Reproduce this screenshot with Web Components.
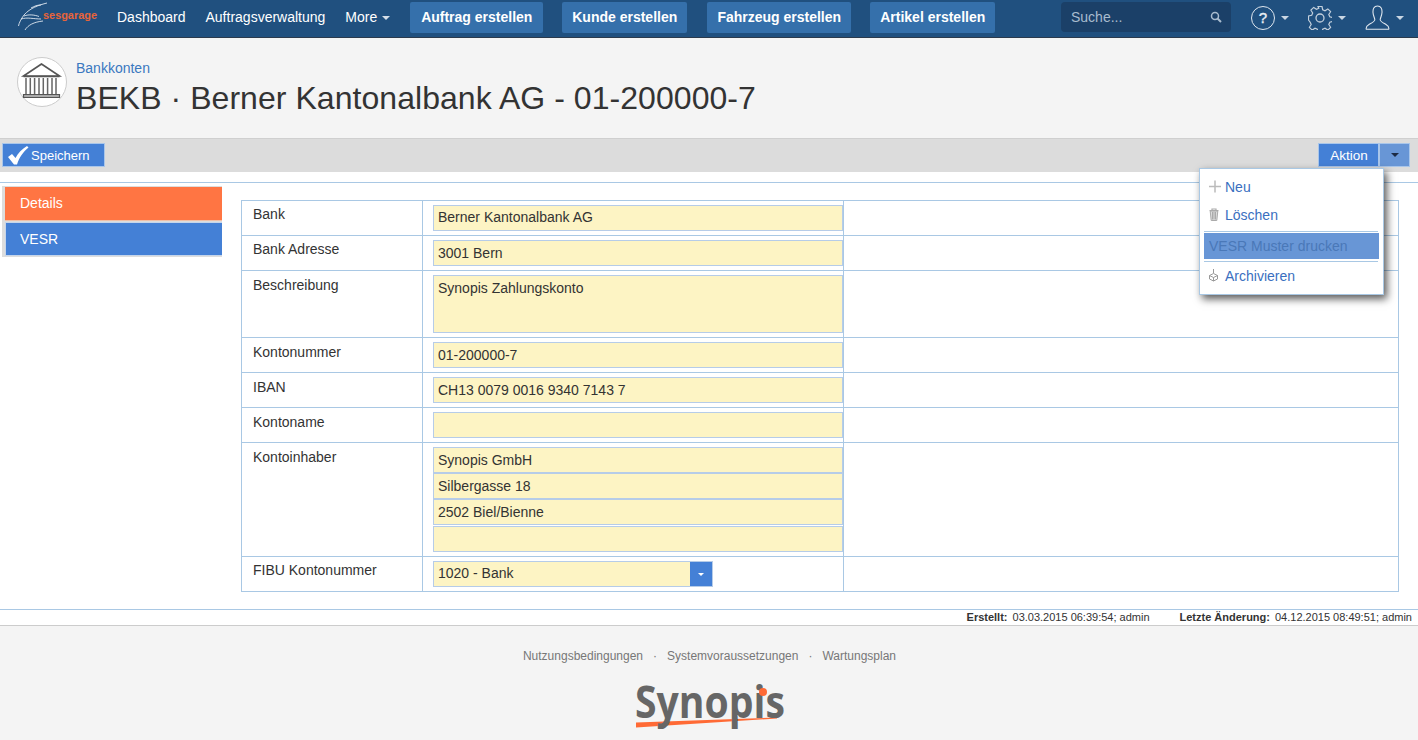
<!DOCTYPE html>
<html lang="de">
<head>
    <meta charset="UTF-8">
    <title>Bankkonten</title>
    <style>
        html, body { margin: 0; height: 100%; overflow: hidden; background: #fff; }
        body { font: 14px "Liberation Sans", Arial, sans-serif; color: #333; }
    </style>
</head>
<body>
    <app-nav>
        <nav-link>Dashboard</nav-link>
        <nav-link>Auftragsverwaltung</nav-link>
        <nav-link caret>More</nav-link>
        <nav-button style="width:133px">Auftrag erstellen</nav-button>
        <nav-button style="width:125px;margin-right:20px">Kunde erstellen</nav-button>
        <nav-button style="width:144px">Fahrzeug erstellen</nav-button>
        <nav-button style="width:125px">Artikel erstellen</nav-button>
    </app-nav>
    <page-header crumb="Bankkonten">BEKB · Berner Kantonalbank AG - 01-200000-7</page-header>
    <tool-bar></tool-bar>
    <main-area>
        <side-tab active>Details</side-tab>
        <side-tab>VESR</side-tab>
        <form-row slot="form" snug label="Bank"><text-field snug>Berner Kantonalbank AG</text-field></form-row>
        <form-row slot="form" snug label="Bank Adresse"><text-field>3001 Bern</text-field></form-row>
        <form-row slot="form" label="Beschreibung"><text-field tall>Synopis Zahlungskonto</text-field></form-row>
        <form-row slot="form" label="Kontonummer"><text-field>01-200000-7</text-field></form-row>
        <form-row slot="form" label="IBAN"><text-field>CH13 0079 0016 9340 7143 7</text-field></form-row>
        <form-row slot="form" label="Kontoname"><text-field></text-field></form-row>
        <form-row slot="form" label="Kontoinhaber">
            <text-field>Synopis GmbH</text-field>
            <text-field>Silbergasse 18</text-field>
            <text-field>2502 Biel/Bienne</text-field>
            <text-field></text-field>
        </form-row>
        <form-row slot="form" snug label="FIBU Kontonummer"><select-field>1020 - Bank</select-field></form-row>
    </main-area>
    <meta-bar></meta-bar>
    <page-footer></page-footer>

    <script>
        const navTemplate = document.createElement('template');
        navTemplate.innerHTML = `
        <style>
            :host { display: flex; align-items: center; height: 35px; background: #20507f; border-bottom: 1px solid #2b3a4c; padding: 0 14px 2px 17px; box-sizing: content-box; }
            .logo { width: 80px; height: 30px; margin-right: 20px; flex: none; overflow: visible; }
            .items { display: flex; align-items: center; }
            .search { margin: -1px 0 0 auto; width: 170px; height: 30px; box-sizing: border-box; padding: 0 9px 0 10px; background: #1b4068; border-radius: 4px; display: flex; align-items: center; justify-content: space-between; color: #a9bccf; font-size: 14px; }
            .tool { display: flex; align-items: center; margin-left: 19px; }
            .tool:first-child { margin-left: 20px; }
            .tool i { margin-left: 6px; border: 4px solid transparent; border-top-color: #c9d6e3; border-bottom: 0; }
            .tools { display: flex; align-items: center; }
        </style>
        <svg class="logo" viewBox="0 0 80 30">
            <g fill="none" stroke="#dfe7ef" stroke-width=".9">
                <path d="M30 0C22 2 13 5 7 12C4 16 2 20 1.500 23"/>
                <path d="M14 5C18 3 20 2 24 2"/>
                <path d="M7 13C12 11 18 12 22 13.500"/>
                <path d="M4 16C10 14 17 16 24 16"/>
                <path d="M8 27C11 22 17 19 26 18"/>
            </g>
            <text x="26" y="16" font-family="'Liberation Sans', sans-serif" font-size="11" font-weight="700" fill="#e8643a" textLength="54" lengthAdjust="spacingAndGlyphs">sesgarage</text>
        </svg>
        <div class="items"><slot></slot></div>
        <div class="search">
            <span>Suche...</span>
            <svg width="12" height="12" viewBox="0 0 12 12" fill="none" stroke="#a9bccf"><circle cx="5" cy="5" r="3.500" stroke-width="1.500"/><path d="M7.500 7.500L11 11" stroke-width="2"/></svg>
        </div>
        <div class="tools">
            <div class="tool">
                <svg width="24" height="24" viewBox="0 0 24 24"><circle cx="12" cy="12" r="11.500" fill="none" stroke="#dfe7ef"/><text x="12" y="17" text-anchor="middle" font-family="'Liberation Sans', sans-serif" font-size="15" fill="#e8eef4" stroke="#e8eef4" stroke-width=".4">?</text></svg>
                <i></i>
            </div>
            <div class="tool">
                <svg width="24" height="24" viewBox="0 0 24 24" fill="none" stroke="#c3d0dd" stroke-width="1.200"><path d="M10 .5h4l.7 3.200 2.300 1 2.800-1.800 2.800 2.800-1.800 2.800 1 2.300 3.200.7v4l-3.200.7-1 2.300 1.800 2.800-2.800 2.800-2.800-1.800-2.300 1-.7 3.200h-4l-.7-3.200-2.300-1-2.800 1.800-2.800-2.800 1.800-2.800-1-2.300L.5 14v-4l3.200-.7 1-2.300-1.800-2.800 2.800-2.800 2.800 1.800 2.300-1z"/><circle cx="12" cy="12" r="4" stroke-width="1.300"/></svg>
                <i></i>
            </div>
            <div class="tool">
                <svg width="25" height="25" viewBox="0 0 25 25" fill="none" stroke="#dfe7ef" stroke-width="1.100"><path d="M12.500 1C8.800 1 7.800 4 8 7.500C8.200 10.500 9.500 12.500 9.800 14.500C10 16.500 7 17.700 4 19.500C1.800 20.800 .8 22.500 1.300 24.300H23.700C24.200 22.500 23.200 20.800 21 19.500C18 17.700 15 16.500 15.200 14.500C15.500 12.500 16.800 10.500 17 7.500C17.200 4 16.200 1 12.500 1Z"/></svg>
                <i></i>
            </div>
        </div>
        `;
        class AppNav extends HTMLElement {
            constructor() {
                super();
                this.attachShadow({mode: 'open'}).appendChild(navTemplate.content.cloneNode(true));
            }
        }

        const navLinkTemplate = document.createElement('template');
        navLinkTemplate.innerHTML = `
        <style>
            :host { display: flex; align-items: center; color: #fff; font-size: 14px; margin-right: 20px; padding-bottom: 2px; }
            i { display: none; margin: 2px 0 0 5px; border: 4px solid transparent; border-top-color: #d5dfe9; border-bottom: 0; }
            :host([caret]) i { display: block; }
        </style>
        <slot></slot><i></i>
        `;
        class NavLink extends HTMLElement {
            constructor() {
                super();
                this.attachShadow({mode: 'open'}).appendChild(navLinkTemplate.content.cloneNode(true));
            }
        }

        const navButtonTemplate = document.createElement('template');
        navButtonTemplate.innerHTML = `
        <style>
            :host { display: block; height: 31px; line-height: 31px; text-align: center; margin-right: 19px; background: #3570ab; color: #fff; font-weight: 700; font-size: 14px; border-radius: 2px; white-space: nowrap; }
        </style>
        <slot></slot>
        `;
        class NavButton extends HTMLElement {
            constructor() {
                super();
                this.attachShadow({mode: 'open'}).appendChild(navButtonTemplate.content.cloneNode(true));
            }
        }

        const headerTemplate = document.createElement('template');
        headerTemplate.innerHTML = `
        <style>
            :host { display: flex; height: 100px; box-sizing: border-box; padding: 19px 0 0 17px; background: #f4f4f4; }
            .badge { width: 50px; height: 50px; box-sizing: border-box; border: 1px solid #ccc; border-radius: 50%; background: #fff; margin-right: 9px; flex: none; }
            .crumb { color: #3a78c0; font-size: 14px; line-height: 16px; margin-top: 3px; }
            .title { color: #333; font-size: 32px; line-height: 40px; margin-top: 2px; white-space: nowrap; letter-spacing: .05px; }
        </style>
        <div class="badge">
            <svg width="48" height="48" viewBox="0 0 48 48" fill="none" stroke="#555">
                <path d="M23.500 6L5.500 18H41.500Z" stroke-width="1.600"/>
                <path d="M5.500 18.500H41.500" stroke-width="1.500"/>
                <path d="M8 20V36M12.300 20V36M16.600 20V36M21 20V36M25.300 20V36M29.600 20V36M34 20V36M38 20V36" stroke="#666" stroke-width="1.500"/>
                <path d="M5.500 36.500H41.500V39.500H5.500Z" fill="#aaa" stroke-width="1.200"/>
            </svg>
        </div>
        <div>
            <div class="crumb"></div>
            <div class="title"><slot></slot></div>
        </div>
        `;
        class PageHeader extends HTMLElement {
            constructor() {
                super();
                const root = this.attachShadow({mode: 'open'});
                root.appendChild(headerTemplate.content.cloneNode(true));
                root.querySelector('.crumb').textContent = this.getAttribute('crumb');
            }
        }

        const toolbarTemplate = document.createElement('template');
        toolbarTemplate.innerHTML = `
        <style>
            :host { display: flex; align-items: center; justify-content: space-between; height: 34px; padding: 0 8px 1px 2px; background: #dcdcdc; border-top: 1px solid #cfcfcf; position: relative; z-index: 2; box-sizing: border-box; }
            .btn { display: flex; align-items: center; box-sizing: border-box; height: 24px; background: #4480d6; border: 1px solid #a9c6ea; color: #fff; font-size: 13px; }
            .save { width: 103px; padding-left: 2px; }
            .save svg { margin-right: 2px; }
            .right { display: flex; gap: 0; position: relative; }
            .act { width: 61px; justify-content: center; font-size: 13.500px; padding-left: 1px; }
            .drop { width: 31px; justify-content: center; background: #6896d6; margin-left: 0; }
            .drop i { border: 4px solid transparent; border-top-color: #1c2b44; border-bottom: 0; }
        </style>
        <div class="btn save">
            <svg width="24" height="22" viewBox="0 0 24 22"><path d="M3 13L7 10L10.500 14C13 9 17 5 22 2L23.500 3.500C18 8 14.500 13 12 20.500H9Z" fill="#fff"/></svg>
            Speichern
        </div>
        <div class="right">
            <div class="btn act">Aktion</div>
            <div class="btn drop"><i></i></div>
            <action-menu></action-menu>
        </div>
        `;
        class ToolBar extends HTMLElement {
            constructor() {
                super();
                this.attachShadow({mode: 'open'}).appendChild(toolbarTemplate.content.cloneNode(true));
            }
        }

        const menuTemplate = document.createElement('template');
        menuTemplate.innerHTML = `
        <style>
            :host { position: absolute; top: 25px; right: 26px; width: 185px; height: 127px; box-sizing: border-box; background: #fff; border: 1px solid #a9c8e4; box-shadow: 3px 4px 8px rgba(0,0,0,.65); padding: 4px 4px 4px; color: #3a6fc0; font-size: 14px; display: block; }
            .item { display: flex; align-items: center; height: 28px; padding-left: 5px; }
            .item svg { width: 13px; margin: -2px 3px 0 0; }
            hr { border: 0; border-top: 1px solid #a9c8e4; margin: 0 1px 0 0; }
            .off { background: #6896d6; color: #4a78b8; height: 26px; padding-left: 5px; display: flex; align-items: center; margin: 1px 0 2px; }
        </style>
        <div class="item"><svg height="13" viewBox="0 0 13 13" stroke="#bbb" fill="none" stroke-width="1.500"><path d="M6 .5V12.500M0 6.500H12"/></svg>Neu</div>
        <div class="item"><svg height="13" viewBox="0 0 13 13" stroke="#aaa" fill="none"><path d="M.5 2.500H9.500M3 2.500V1H7V2.500" stroke-width="1.200"/><path d="M1.200 3L2.200 12.500H7.800L8.800 3Z" fill="#ddd"/><path d="M3.500 4V11.500M5 4V11.500M6.500 4V11.500"/></svg>Löschen</div>
        <hr style="margin-top:2px">
        <div class="off">VESR Muster drucken</div>
        <hr>
        <div class="item"><svg height="13" viewBox="0 0 13 13" stroke="#999" fill="none"><path d="M4.500 0V4M.5 6.500L4.500 4.500L8.500 6.500L4.500 8.500ZM.5 6.500V10L4.500 12L8.500 10V6.500M4.500 8.500V12"/></svg>Archivieren</div>
        `;
        class ActionMenu extends HTMLElement {
            constructor() {
                super();
                this.attachShadow({mode: 'open'}).appendChild(menuTemplate.content.cloneNode(true));
            }
        }

        const mainTemplate = document.createElement('template');
        mainTemplate.innerHTML = `
        <style>
            :host { display: block; height: 437px; box-sizing: border-box; padding-top: 10px; background: #fff; }
            .wrap { display: flex; border-top: 1px solid #a9c8e4; padding-top: 3px; }
            .side { width: 220px; margin-left: 2px; flex: none; background: #ddd; align-self: flex-start; padding: 1px 0 1px 3px; box-sizing: border-box; display: flex; flex-direction: column; gap: 1px; }
            .form { flex: 1; margin: 14px 19px 0 19px; border: 1px solid #a9c8e4; border-bottom: 0; }
        </style>
        <div class="wrap">
            <div class="side"><slot></slot></div>
            <div class="form"><slot name="form"></slot></div>
        </div>
        `;
        class MainArea extends HTMLElement {
            constructor() {
                super();
                this.attachShadow({mode: 'open'}).appendChild(mainTemplate.content.cloneNode(true));
            }
        }

        const tabTemplate = document.createElement('template');
        tabTemplate.innerHTML = `
        <style>
            :host { display: block; height: 34px; line-height: 32px; padding-left: 14px; background: #4480d6; color: #fff; font-size: 14px; box-sizing: border-box; border: 1px solid #c6d5ea; border-right: 0; }
            :host([active]) { background: #ff7543; border: 0; border-bottom: 1px solid #f0c0a8; padding-left: 15px; line-height: 33px; }
        </style>
        <slot></slot>
        `;
        class SideTab extends HTMLElement {
            constructor() {
                super();
                this.attachShadow({mode: 'open'}).appendChild(tabTemplate.content.cloneNode(true));
            }
        }

        const rowTemplate = document.createElement('template');
        rowTemplate.innerHTML = `
        <style>
            :host { display: grid; grid-template-columns: 181px 421px 1fr; border-bottom: 1px solid #a9c8e4; }
            .label { padding: 6px 0 0 11px; color: #333; font-size: 14px; line-height: 16px; border-right: 1px solid #a9c8e4; }
            :host([snug]) .label { padding-top: 5px; }
            .value { padding: 4px 0 4px 10px; border-right: 1px solid #a9c8e4; }
        </style>
        <div class="label"></div>
        <div class="value"><slot></slot></div>
        <div></div>
        `;
        class FormRow extends HTMLElement {
            constructor() {
                super();
                const root = this.attachShadow({mode: 'open'});
                root.appendChild(rowTemplate.content.cloneNode(true));
                root.querySelector('.label').textContent = this.getAttribute('label');
            }
        }

        const fieldTemplate = document.createElement('template');
        fieldTemplate.innerHTML = `
        <style>
            :host { display: block; height: 26px; box-sizing: border-box; border: 1px solid #b6cce8; background: #fdf4c4; color: #333; font-size: 14px; line-height: 24px; padding-left: 4px; }
            :host([snug]) { line-height: 22px; }
            :host([tall]) { height: 58px; line-height: 24px; }
            :host(:last-child:not(:first-child)) { margin-top: 1px; }
        </style>
        <slot></slot>
        `;
        class TextField extends HTMLElement {
            constructor() {
                super();
                this.attachShadow({mode: 'open'}).appendChild(fieldTemplate.content.cloneNode(true));
            }
        }

        const selectTemplate = document.createElement('template');
        selectTemplate.innerHTML = `
        <style>
            :host { display: flex; width: 280px; height: 26px; box-sizing: border-box; border: 1px solid #b6cce8; background: #fdf4c4; color: #333; font-size: 14px; line-height: 22px; }
            .text { flex: 1; padding-left: 4px; }
            .arrow { width: 22px; background: #4480d6; display: flex; align-items: center; justify-content: center; }
            i { border: 3.500px solid transparent; border-top-color: #fff; border-bottom: 0; }
        </style>
        <div class="text"><slot></slot></div>
        <div class="arrow"><i></i></div>
        `;
        class SelectField extends HTMLElement {
            constructor() {
                super();
                this.attachShadow({mode: 'open'}).appendChild(selectTemplate.content.cloneNode(true));
            }
        }

        const metaTemplate = document.createElement('template');
        metaTemplate.innerHTML = `
        <style>
            :host { display: flex; justify-content: flex-end; height: 17px; box-sizing: border-box; border-top: 1px solid #a9c8e4; border-bottom: 1px solid #ccc; padding-right: 6px; font-size: 11px; line-height: 15px; color: #333; background: #fff; }
            b { margin-right: 5px; }
            .gap { margin-left: 30px; }
        </style>
        <span><b>Erstellt:</b>03.03.2015 06:39:54; admin</span>
        <span class="gap"><b>Letzte Änderung:</b>04.12.2015 08:49:51; admin</span>
        `;
        class MetaBar extends HTMLElement {
            constructor() {
                super();
                this.attachShadow({mode: 'open'}).appendChild(metaTemplate.content.cloneNode(true));
            }
        }

        const footerTemplate = document.createElement('template');
        footerTemplate.innerHTML = `
        <style>
            :host { display: block; height: 114px; background: #f4f4f4; text-align: center; box-sizing: border-box; padding-top: 23px; color: #777; font-size: 12px; line-height: 14px; }
            .links { display: flex; justify-content: center; gap: 10px; padding-left: 1px; }
            svg { display: block; margin: 17px auto 0; overflow: visible; }
        </style>
        <div class="links">
            <span>Nutzungsbedingungen</span><span>·</span>
            <span>Systemvoraussetzungen</span><span>·</span>
            <span>Wartungsplan</span>
        </div>
        <svg width="152" height="50" viewBox="0 0 152 50">
            <path d="M3 42.500L144 37.500V38.500L3 47.500Z" fill="#ff6a35"/>
            <text x="2" y="38" font-family="'Open Sans', sans-serif" font-size="44" font-weight="700" fill="#666" textLength="150" lengthAdjust="spacingAndGlyphs">Synopis</text>
            <circle cx="130" cy="12" r="4" fill="#ff6a35"/>
        </svg>
        `;
        class PageFooter extends HTMLElement {
            constructor() {
                super();
                this.attachShadow({mode: 'open'}).appendChild(footerTemplate.content.cloneNode(true));
            }
        }

        window.customElements.define('app-nav', AppNav);
        window.customElements.define('nav-link', NavLink);
        window.customElements.define('nav-button', NavButton);
        window.customElements.define('page-header', PageHeader);
        window.customElements.define('tool-bar', ToolBar);
        window.customElements.define('action-menu', ActionMenu);
        window.customElements.define('main-area', MainArea);
        window.customElements.define('side-tab', SideTab);
        window.customElements.define('form-row', FormRow);
        window.customElements.define('text-field', TextField);
        window.customElements.define('select-field', SelectField);
        window.customElements.define('meta-bar', MetaBar);
        window.customElements.define('page-footer', PageFooter);
    </script>
</body>
</html>
